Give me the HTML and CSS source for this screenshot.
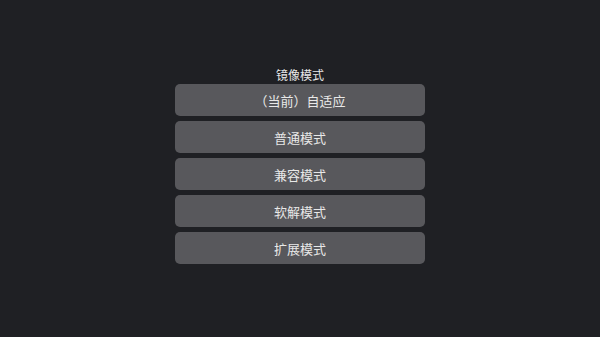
FILE: index.html
```html
<!DOCTYPE html>
<html lang="zh-CN">
<head>
    <meta charset="UTF-8">
    <meta name="viewport" content="width=device-width, initial-scale=1.0">
    <title>镜像模式</title>
    <link rel="stylesheet" href="styles.css">
</head>
<body>
    <div class="panel">
        <div class="title">镜像模式</div>
        <div class="mode-list">
            <button class="mode-btn">（当前）自适应</button>
            <button class="mode-btn">普通模式</button>
            <button class="mode-btn">兼容模式</button>
            <button class="mode-btn">软解模式</button>
            <button class="mode-btn">扩展模式</button>
        </div>
    </div>
</body>
</html>
```

FILE: styles.css
```css
* {
    box-sizing: border-box;
}
html, body {
    margin: 0;
    height: 100%;
}
body {
    background-color: #1f2024;
    font-family: "Noto Sans CJK SC", "Noto Sans", sans-serif;
    color: #e8e8e8;
}
.panel {
    width: 250px;
    margin: 0 auto;
    padding-top: 67px;
    display: flex;
    flex-direction: column;
    align-items: center;
}
.title {
    font-size: 12px;
    line-height: 16px;
    margin-bottom: 1px;
}
.mode-list {
    width: 100%;
    display: flex;
    flex-direction: column;
    gap: 5px;
}
.mode-btn {
    width: 100%;
    height: 32px;
    border: none;
    border-radius: 5px;
    background-color: #58585c;
    color: #e8e8e8;
    font-family: inherit;
    font-size: 13px;
    padding: 0;
}
```
